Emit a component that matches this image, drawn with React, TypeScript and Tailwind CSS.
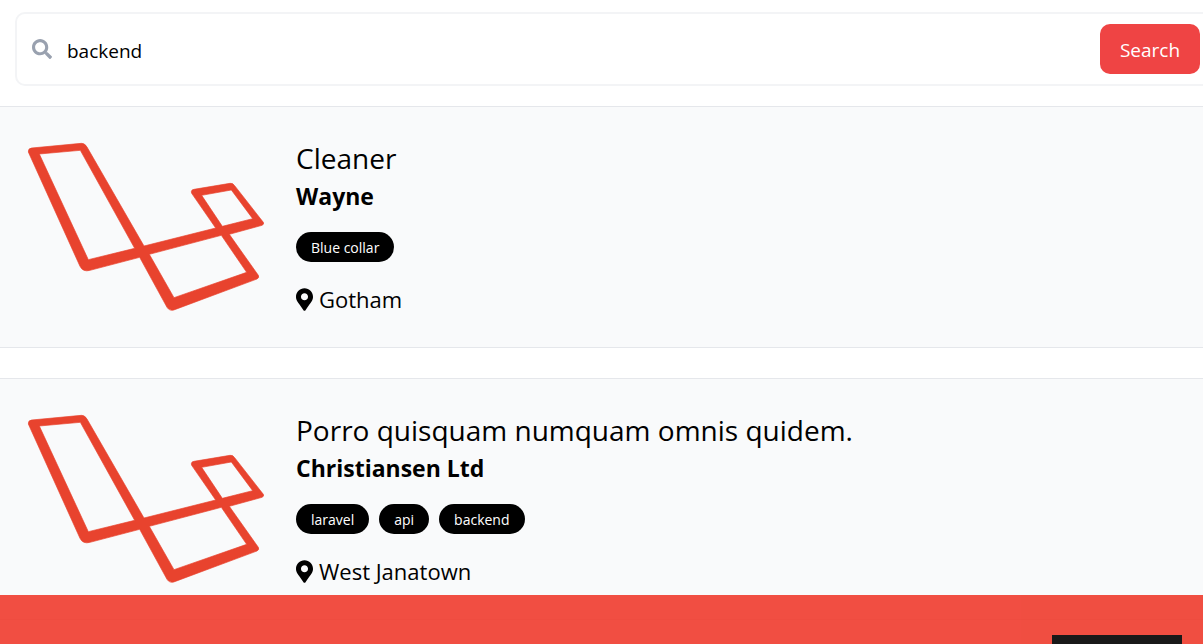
import { useState } from "react";
import { FaMapMarkerAlt, FaSearch } from "react-icons/fa";

type Listing = {
  title: string;
  company: string;
  tags: string[];
  location: string;
};

const listings: Listing[] = [
  {
    title: "Cleaner",
    company: "Wayne",
    tags: ["Blue collar"],
    location: "Gotham",
  },
  {
    title: "Porro quisquam numquam omnis quidem.",
    company: "Christiansen Ltd",
    tags: ["laravel", "api", "backend"],
    location: "West Janatown",
  },
];

function CompanyLogo() {
  return (
    <svg viewBox="81 30 714 516" className="w-[238px] shrink-0" role="img" aria-label="Company logo">
      <path
        fill="#e8432e"
        stroke="#e8432e"
        strokeWidth="2"
        strokeLinejoin="round"
        fillRule="evenodd"
        d="M85 66Q84 55 95 54L244 40Q254 39 261 51L432 348L647 294L575 190Q571 180 582 178L690 160Q698 158 704 167L790 277Q793 283 786 286L688 313L775 436Q779 443 771 447L524 539Q509 545 501 532L419 382L270 421Q249 427 240 409ZM118 72L265 389L404 355L241 61ZM605 196L667 289L758 266L694 180ZM448 373L522 503L740 427L664 316Z"
      />
    </svg>
  );
}

function SearchForm() {
  const [query, setQuery] = useState("backend");
  return (
    <form role="search" onSubmit={(event) => event.preventDefault()} className="-mr-4 pt-3 pb-5 pl-[15px]">
      <div className="flex items-center rounded-[10px] border-2 border-gray-100 py-2.5 pr-[17px] pl-[15px]">
        <FaSearch className="size-5 shrink-0 text-gray-400" aria-hidden="true" />
        <input
          type="text"
          aria-label="Search listings"
          value={query}
          onChange={(event) => setQuery(event.target.value)}
          className="h-[50px] min-w-0 flex-1 bg-transparent px-[15px] pt-1 text-[19px] outline-none"
        />
        <button type="submit" className="h-[50px] w-[100px] rounded-[10px] bg-[#ef4444] pt-0.5 text-[19px] text-white">
          Search
        </button>
      </div>
    </form>
  );
}

function ListingCard({ listing }: { listing: Listing }) {
  return (
    <article className="flex items-start border-y border-gray-200 bg-gray-50 px-[27px] py-[30px]">
      <div className="pt-[3px] pr-[31px]">
        <CompanyLogo />
      </div>
      <div>
        <h3 className="text-[28px] leading-[43px]">
          <a href="#listing">{listing.title}</a>
        </h3>
        <p className="text-[23px] leading-[32px] font-bold">{listing.company}</p>
        <ul className="mt-5 flex gap-2.5">
          {listing.tags.map((tag) => (
            <li key={tag} className="flex h-[30px] items-center rounded-full bg-black px-[15px] text-[14px] text-white">
              <a href="#tag">{tag}</a>
            </li>
          ))}
        </ul>
        <p className="mt-5 flex items-center gap-1.5 text-[22px] leading-[35px]">
          <FaMapMarkerAlt className="h-[23px] w-[17px]" aria-hidden="true" />
          {listing.location}
        </p>
      </div>
    </article>
  );
}

export default function App() {
  return (
    <div className="h-screen overflow-hidden bg-white font-['Open_Sans',sans-serif] text-black">
      <main>
        <SearchForm />
        <div className="flex flex-col gap-[30px]">
          {listings.map((listing) => (
            <ListingCard key={listing.company} listing={listing} />
          ))}
        </div>
      </main>
      <footer className="fixed inset-x-0 bottom-0 flex h-[49px] items-start justify-end overflow-hidden bg-[#ef3b2d] pt-10 pr-[21px] opacity-90">
        <a href="#post" aria-label="Post a listing" className="h-[50px] w-[130px] shrink-0 bg-black" />
      </footer>
    </div>
  );
}
